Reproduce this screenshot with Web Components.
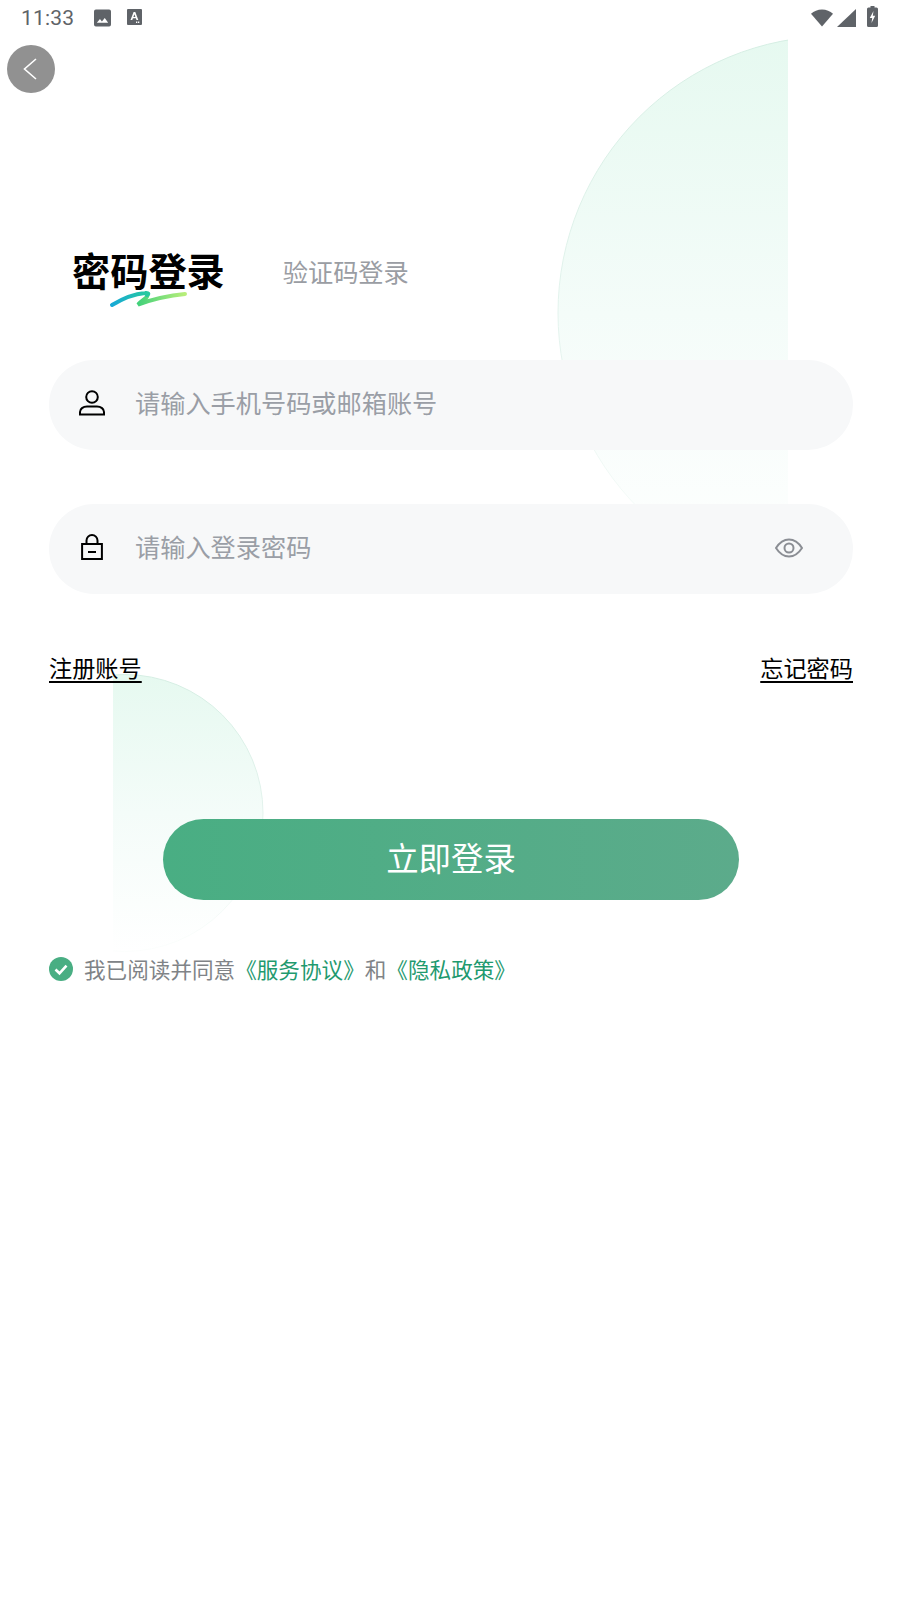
<!DOCTYPE html>
<html lang="zh">
<head>
<meta charset="utf-8">
<title>密码登录</title>
<style>
  html, body { margin: 0; background: #fff; }
  body { font-family: "Noto Sans CJK SC", "Noto Sans", sans-serif; }
</style>
</head>
<body>
<login-page></login-page>
<script>
// small helper: each element gets an open shadow root from a string
class Base extends HTMLElement {
  constructor() {
    super();
    this.attachShadow({ mode: 'open' });
    this.shadowRoot.innerHTML = this.constructor.markup(this);
  }
}

class StatusBar extends Base {
  static markup() {
    return `
    <style>
      :host { display: flex; align-items: center; height: 36px; padding: 0 22px 0 21px; color: #5f6368; font: 21px Roboto, sans-serif; }
      .time { width: 73px; letter-spacing: .2px; }
      .left { display: flex; gap: 16px; flex: 1; }
      .right { display: flex; align-items: center; }
      svg { display: block; fill: #5f6368; }
    </style>
    <span class="time">11:33</span>
    <div class="left">
      <svg width="17" height="18" viewBox="0 0 18 18"><path fill-rule="evenodd" d="M2 0h14a2 2 0 0 1 2 2v14a2 2 0 0 1-2 2H2a2 2 0 0 1-2-2V2a2 2 0 0 1 2-2zM3 14h12l-3.600-5-3 3.600L6.300 10z"/></svg>
      <svg width="15" height="16" viewBox="0 0 15 16"><path fill-rule="evenodd" d="M1 0h13a1 1 0 0 1 1 1v14a1 1 0 0 1-1 1H1a1 1 0 0 1-1-1V1a1 1 0 0 1 1-1zM6.600 3 3.500 11h1.800l.6-1.700h3l.6 1.700h1.800L8.300 3zM7.400 5.200l1 2.700h-2zM9 12.600h1.300v1.300H9zM11 12.600h1.300v1.300H11z"/></svg>
    </div>
    <div class="right">
      <svg width="22" height="18" viewBox="0 0 23 18" style="margin-right:4px"><path d="M11.500 18 0 4.500C3 1.800 7 0 11.500 0S20 1.800 23 4.500z"/></svg>
      <svg width="19" height="18" viewBox="0 0 19 18" style="margin-right:11px"><path d="M19 0v18H0z"/></svg>
      <svg width="11" height="21" viewBox="0 0 11 21" style="margin-top:-3px"><path fill-rule="evenodd" d="M3.500 0h4v1.500H9.500A1.500 1.500 0 0 1 11 3v16.500A1.500 1.500 0 0 1 9.500 21h-8A1.500 1.500 0 0 1 0 19.500V3a1.500 1.500 0 0 1 1.500-1.500h2zM6.500 5 2.800 12h2.400l-.7 5 3.700-7.200H5.800z"/></svg>
    </div>`;
  }
}

class BackButton extends Base {
  static markup() {
    return `
    <style>
      :host { display: flex; align-items: center; justify-content: center; width: 48px; height: 48px; margin: 9px 0 0 7px; border-radius: 50%; background: #919191; }
      svg { display: block; }
    </style>
    <svg width="16" height="24" viewBox="0 0 16 24"><path d="M13 2 1.500 12 13 22" fill="none" stroke="#fff" stroke-width="1.600"/></svg>`;
  }
}

class LoginTabs extends Base {
  static markup() {
    return `
    <style>
      :host { display: flex; align-items: center; height: 60px; margin: 148px 0 59px 72px; gap: 58px; }
      .active { position: relative; font-size: 38.200px; font-weight: 700; line-height: 56px; padding-bottom: 2px; color: #000; }
      .active svg { position: absolute; left: 37px; top: 46px; }
      .other { font-size: 25.200px; color: #9a9da3; }
    </style>
    <span class="active">密码登录
      <svg width="80" height="22" viewBox="0 0 80 22" fill="none" stroke-width="4" stroke-linecap="round">
        <defs>
          <linearGradient id="sq1" gradientUnits="userSpaceOnUse" x1="3" x2="38" y1="0" y2="0">
            <stop offset="0" stop-color="#17a9d6"/><stop offset="1" stop-color="#27c9a0"/>
          </linearGradient>
          <linearGradient id="sq2" gradientUnits="userSpaceOnUse" x1="28" x2="76" y1="0" y2="0">
            <stop offset="0" stop-color="#3fd07a"/><stop offset="1" stop-color="#b8ee7a"/>
          </linearGradient>
        </defs>
        <path d="M38 7C40 9 33 12 29 16.500 36 14 55 8 76 6" stroke="url(#sq2)"/>
        <path d="M3 17C13 11 24 6 36 5 40 4.500 40 6 38 7" stroke="url(#sq1)"/>
      </svg>
    </span>
    <span class="other">验证码登录</span>`;
  }
}

class LoginField extends Base {
  static markup(el) {
    return `
    <style>
      :host { display: flex; align-items: center; height: 90px; margin: 0 47px 54px 49px; padding: 0 50px 0 28px; border-radius: 45px; background: #f7f8f9; position: relative; }
      .icon { display: flex; justify-content: center; width: 30px; margin: 0 28px 4px 0; }
      .ph { flex: 1; font-size: 25.200px; line-height: 36px; margin-bottom: 6px; color: #9a9ea6; }
    </style>
    <span class="icon"><slot name="icon"></slot></span>
    <span class="ph">${el.getAttribute('placeholder')}</span>
    <slot name="end"></slot>`;
  }
}

class FormLinks extends Base {
  static markup() {
    return `
    <style>
      :host { display: flex; justify-content: space-between; margin: 58px 47px 0 49px; font-size: 23.200px; line-height: 30px; color: #000; position: relative; }
      span { text-decoration: underline; text-underline-offset: 4px; }
    </style>
    <span>注册账号</span><span>忘记密码</span>`;
  }
}

class PrimaryButton extends Base {
  static markup() {
    return `
    <style>
      :host { display: flex; align-items: center; justify-content: center; box-sizing: border-box; width: 576px; height: 81px; margin: 137px 0 0 163px; padding-bottom: 6px; border-radius: 41px; background: linear-gradient(90deg, #49ae83, #5cab8b); color: #fff; font-size: 32.400px; position: relative; }
    </style>
    <slot></slot>`;
  }
}

class AgreeRow extends Base {
  static markup() {
    return `
    <style>
      :host { display: flex; align-items: center; height: 30px; margin: 54px 0 0 49px; font-size: 21.600px; color: #808387; position: relative; }
      svg { display: block; margin-right: 11px; }
      span { position: relative; top: -1px; }
      em { font-style: normal; color: #1f9a6f; }
    </style>
    <svg width="24" height="24" viewBox="0 0 24 24"><circle cx="12" cy="12" r="12" fill="#49ae83"/><path d="m6.500 12.500 4 3.800 7-7.600" fill="none" stroke="#fff" stroke-width="2.600"/></svg>
    <span>我已阅读并同意<em>《服务协议》</em>和<em>《隐私政策》</em></span>`;
  }
}

// decorative quarter circles behind the form, clipped on one side
class DecoCircle extends Base {
  static markup(el) {
    const [x, y, w, h] = el.getAttribute('box').split(' ').map(Number);
    const [cx, cy, r] = el.getAttribute('circle').split(' ').map(Number);
    const id = el.getAttribute('gid');
    return `
    <style>
      :host { position: absolute; left: ${x}px; top: ${y}px; width: ${w}px; height: ${h}px; overflow: hidden; }
      svg { display: block; }
    </style>
    <svg width="${w}" height="${h}" viewBox="${x} ${y} ${w} ${h}">
      <defs>
        <linearGradient id="${id}f" x1="0" x2="0" y1="0" y2="1">
          <stop offset="0" stop-color="#e6f9f0"/><stop offset=".5" stop-color="#f4fcf9"/><stop offset="1" stop-color="#fff"/>
        </linearGradient>
        <linearGradient id="${id}s" x1="0" x2="0" y1="0" y2="1">
          <stop offset="0" stop-color="#d5eee3"/><stop offset=".6" stop-color="#e6f4ef"/><stop offset="1" stop-color="#fcfefd"/>
        </linearGradient>
      </defs>
      <circle cx="${cx}" cy="${cy}" r="${r}" fill="url(#${id}f)" stroke="url(#${id}s)" stroke-width="1"/>
    </svg>`;
  }
}

class LoginPage extends Base {
  static markup() {
    return `
    <style>
      :host { display: block; position: relative; height: 1600px; overflow: hidden; background: #fff; }
      status-bar, back-button, login-tabs { position: relative; }
    </style>
    <deco-circle gid="a" box="557 36 231 556" circle="835 313 277"></deco-circle>
    <deco-circle gid="b" box="113 672 152 282" circle="124.500 813 138.500"></deco-circle>
    <status-bar></status-bar>
    <back-button></back-button>
    <login-tabs></login-tabs>
    <login-field placeholder="请输入手机号码或邮箱账号">
      <svg slot="icon" width="28" height="26" viewBox="0 0 28 26" fill="none" stroke="#000" stroke-width="2">
        <circle cx="14" cy="7" r="5.800"/>
        <path d="M2 24.500v-2.500c0-3 3-5.500 7-5.500h10c4 0 7 2.500 7 5.500v2.500z"/>
      </svg>
    </login-field>
    <login-field placeholder="请输入登录密码">
      <svg slot="icon" width="22" height="26" viewBox="0 0 22 26" fill="none" stroke="#000" stroke-width="2">
        <path d="M5.500 10V6.500a5.500 5.500 0 0 1 11 0V10"/>
        <rect x="1.100" y="10" width="19.800" height="15" />
        <path d="M7 18h8"/>
      </svg>
      <svg slot="end" width="28" height="20" viewBox="0 0 28 20" fill="none" stroke="#8b8e94" stroke-width="2" style="margin-bottom:2px">
        <path d="M1 10C4.500 4.500 9 1.500 14 1.500S23.500 4.500 27 10c-3.500 5.500-8 8.500-13 8.500S4.500 15.500 1 10z"/>
        <circle cx="14" cy="10" r="4.500"/>
      </svg>
    </login-field>
    <form-links></form-links>
    <primary-button>立即登录</primary-button>
    <agree-row></agree-row>`;
  }
}

// children first, the page last
customElements.define('status-bar', StatusBar);
customElements.define('back-button', BackButton);
customElements.define('login-tabs', LoginTabs);
customElements.define('login-field', LoginField);
customElements.define('form-links', FormLinks);
customElements.define('primary-button', PrimaryButton);
customElements.define('agree-row', AgreeRow);
customElements.define('deco-circle', DecoCircle);
customElements.define('login-page', LoginPage);
</script>
</body>
</html>
